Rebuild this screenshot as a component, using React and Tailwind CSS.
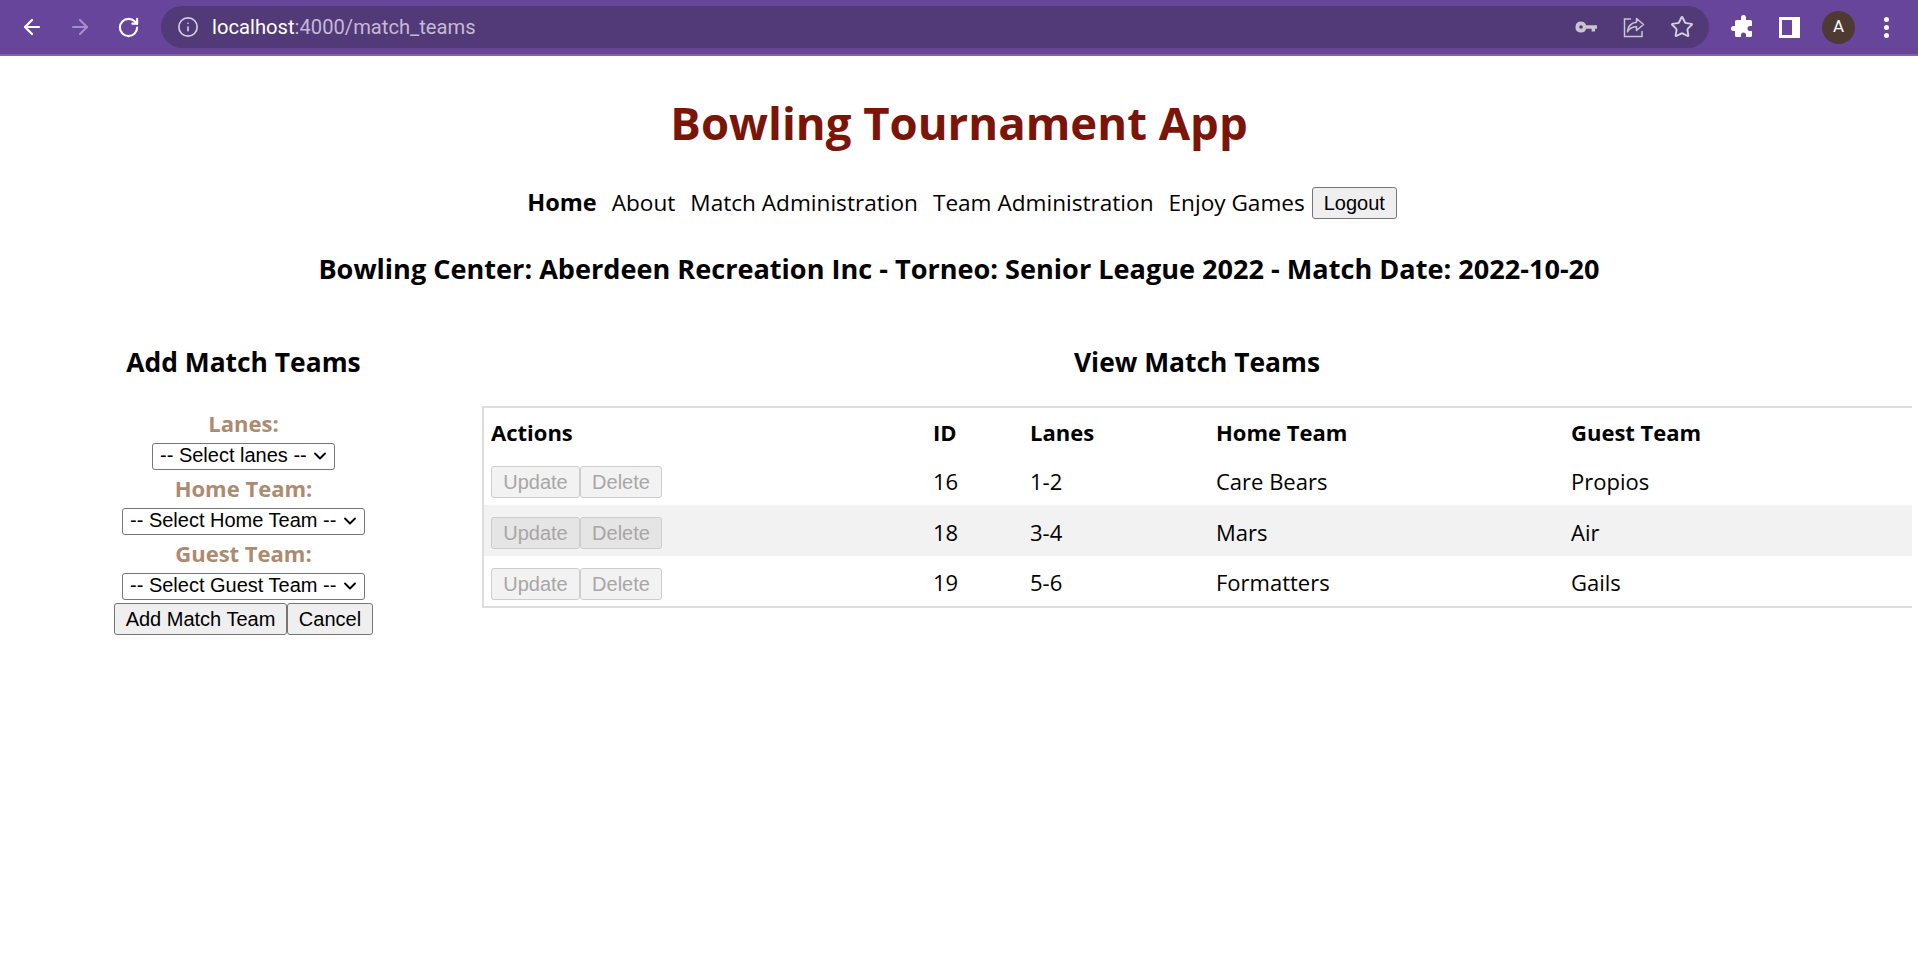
import React from 'react';
import { ArrowLeft, ArrowRight, RotateCw, Info, Star, ChevronDown } from 'lucide-react';

const ROWS = [
  { id: 16, lanes: '1-2', home: 'Care Bears', guest: 'Propios' },
  { id: 18, lanes: '3-4', home: 'Mars', guest: 'Air' },
  { id: 19, lanes: '5-6', home: 'Formatters', guest: 'Gails' },
];

function BrowserBar() {
  return (
    <div className="h-[56px] bg-[#67459b] border-b-[2px] border-[#8560b0] flex items-center font-['Roboto',sans-serif]">
      <div className="w-[161px] flex items-center pl-[20px] gap-[24px] shrink-0">
        <ArrowLeft size={24} strokeWidth={2.2} className="text-white" />
        <ArrowRight size={24} strokeWidth={2.2} className="text-[#a48fc4]" />
        <RotateCw size={23} strokeWidth={2.2} className="text-white ml-[1px]" />
      </div>
      <div className="w-[1548px] h-[42px] rounded-full bg-[#523a78] flex items-center pl-[16px] pr-[15px] shrink-0">
        <Info size={22} strokeWidth={1.8} className="text-[#d5cfe0]" />
        <div className="ml-[13px] text-[20.2px] text-[#c4b9d6]">
          <span className="text-white">localhost</span>:4000/match_teams
        </div>
        <div className="ml-auto flex items-center gap-[24px]">
          <svg width="24" height="24" viewBox="0 0 24 24" fill="#c8c4d0">
            <path d="M7 6.500a5.500 5.500 0 0 1 5.200 3.800H23v3.400h-2v2.800h-3.400v-2.800h-5.400A5.500 5.500 0 1 1 7 6.500zm0 3.700a1.800 1.800 0 1 0 0 3.600 1.800 1.800 0 0 0 0-3.600z" />
          </svg>
          <svg width="24" height="24" viewBox="0 0 24 24" fill="none" stroke="#c8c4d0" strokeWidth="1.5">
            <path d="M9 4H2.500v17.500H20V16" />
            <path d="M14.500 3.500l7 6-7 6v-3.700c-4.500 0-7 1.500-9 5 .5-5.500 3.500-9 9-9.600z" strokeLinejoin="round" />
          </svg>
          <Star size={24} strokeWidth={1.9} className="text-[#d5cfe0]" />
        </div>
      </div>
      <div className="flex items-center pl-[22px]">
        <svg width="24" height="24" viewBox="0 0 24 24" fill="white">
          <path d="M10 2.500a2.500 2.500 0 0 1 5 0V5h4.500a1.500 1.500 0 0 1 1.500 1.500V11h-2a2.500 2.500 0 0 0 0 5h2v4.500a1.500 1.500 0 0 1-1.500 1.500H15v-2a2.500 2.500 0 0 0-5 0v2H5.500A1.500 1.500 0 0 1 4 20.500V16H2.500a2.500 2.500 0 0 1 0-5H4V6.500A1.500 1.500 0 0 1 5.500 5H10z" />
        </svg>
        <div className="ml-[24px] w-[21px] h-[21px] border-[3px] border-white border-r-[8px]" />
        <div className="ml-[22px] w-[33px] h-[33px] rounded-full bg-[#4f3a33] flex items-center justify-center text-white text-[17px]">A</div>
        <div className="ml-[29px] flex flex-col gap-[3px]">
          <div className="w-[5px] h-[5px] rounded-full bg-white" />
          <div className="w-[5px] h-[5px] rounded-full bg-white" />
          <div className="w-[5px] h-[5px] rounded-full bg-white" />
        </div>
      </div>
    </div>
  );
}

function NativeButton({ children, disabled, className = '' }) {
  return (
    <button
      disabled={disabled}
      className={`h-[32px] px-[10px] border rounded-[3px] text-[20px] leading-none font-['Liberation_Sans',sans-serif] ${
        disabled ? 'border-[#cdcdcd] bg-black/5 text-[#a9a6a6]' : 'border-[#767676] bg-[#efefef] text-black'
      } ${className}`}
    >
      {children}
    </button>
  );
}

function Field({ label, placeholder, width }) {
  return (
    <>
      <div className="text-[22px] leading-[36px] pb-[2px] font-bold text-[#ad8a70] text-center">{label}</div>
      <div className={`relative ${width} h-[27px]`}>
        <select className="appearance-none w-full h-full bg-white border border-[#767676] rounded-[3px] text-[20px] leading-[22px] font-['Liberation_Sans',sans-serif] text-black pl-[7px] pb-[4px]">
          <option>{placeholder}</option>
        </select>
        <ChevronDown size={20} strokeWidth={2.2} className="absolute right-[5px] top-[3px] text-black pointer-events-none" />
      </div>
    </>
  );
}

function AddForm() {
  return (
    <div className="w-[482px] shrink-0 pl-[5px] flex flex-col items-center">
      <h3 className="text-[26.4px] leading-[36px] font-bold text-black">Add Match Teams</h3>
      <div className="mt-[25px] flex flex-col items-center">
        <Field label="Lanes:" placeholder="-- Select lanes --" width="w-[183px]" />
        <Field label="Home Team:" placeholder="-- Select Home Team --" width="w-[243px]" />
        <Field label="Guest Team:" placeholder="-- Select Guest Team --" width="w-[243px]" />
        <div className="flex mt-[3px]">
          <NativeButton className="w-[173px]">Add Match Team</NativeButton>
          <NativeButton className="w-[86px]">Cancel</NativeButton>
        </div>
      </div>
    </div>
  );
}

function MatchTable() {
  return (
    <div className="flex-1 mr-[6px]">
      <h3 className="text-[26.4px] leading-[36px] font-bold text-black text-center">View Match Teams</h3>
      <table className="mt-[26px] w-full border-collapse border-y-2 border-l-2 border-[#dddddd] text-[22px] text-black table-fixed">
        <thead>
          <tr className="h-[47px] font-bold text-left">
            <th className="w-[442px] pl-[7px] pt-[3px]">Actions</th>
            <th className="w-[97px] pl-[8px] pt-[3px]">ID</th>
            <th className="w-[186px] pl-[8px] pt-[3px]">Lanes</th>
            <th className="w-[355px] pl-[8px] pt-[3px]">Home Team</th>
            <th className="pl-[8px] pt-[3px]">Guest Team</th>
          </tr>
        </thead>
        <tbody>
          {ROWS.map((row, i) => (
            <tr key={row.id} className={i === 1 ? 'h-[51px] bg-[#f2f2f2]' : 'h-[51px]'}>
              <td className="pl-[7px] pt-[5px]">
                <div className="flex">
                  <NativeButton disabled className="w-[89px]">Update</NativeButton>
                  <NativeButton disabled className="w-[82px]">Delete</NativeButton>
                </div>
              </td>
              <td className="pl-[8px] pt-[3px]">{row.id}</td>
              <td className="pl-[8px] pt-[3px]">{row.lanes}</td>
              <td className="pl-[8px] pt-[3px]">{row.home}</td>
              <td className="pl-[8px] pt-[3px]">{row.guest}</td>
            </tr>
          ))}
        </tbody>
      </table>
    </div>
  );
}

export default function App() {
  return (
    <div className="min-h-[955px] bg-white font-['Open_Sans',sans-serif]">
      <BrowserBar />
      <h1 className="mt-[36px] text-center text-[45.500px] leading-[60px] font-bold text-[#7b1409]">Bowling Tournament App</h1>
      <nav className="mt-[33px] pl-[6px] flex justify-center items-center text-[22.600px] text-black">
        <a className="font-bold text-[23.500px]">Home</a>
        <a className="ml-[15px]">About</a>
        <a className="ml-[15px]">Match Administration</a>
        <a className="ml-[15px]">Team Administration</a>
        <a className="ml-[15px]">Enjoy Games</a>
        <NativeButton className="ml-[7px] w-[85px]">Logout</NativeButton>
      </nav>
      <h2 className="mt-[31px] text-center text-[27.100px] leading-[36px] font-bold text-black">
        Bowling Center: Aberdeen Recreation Inc - Torneo: Senior League 2022 - Match Date: 2022-10-20
      </h2>
      <div className="mt-[57px] flex">
        <AddForm />
        <MatchTable />
      </div>
    </div>
  );
}
